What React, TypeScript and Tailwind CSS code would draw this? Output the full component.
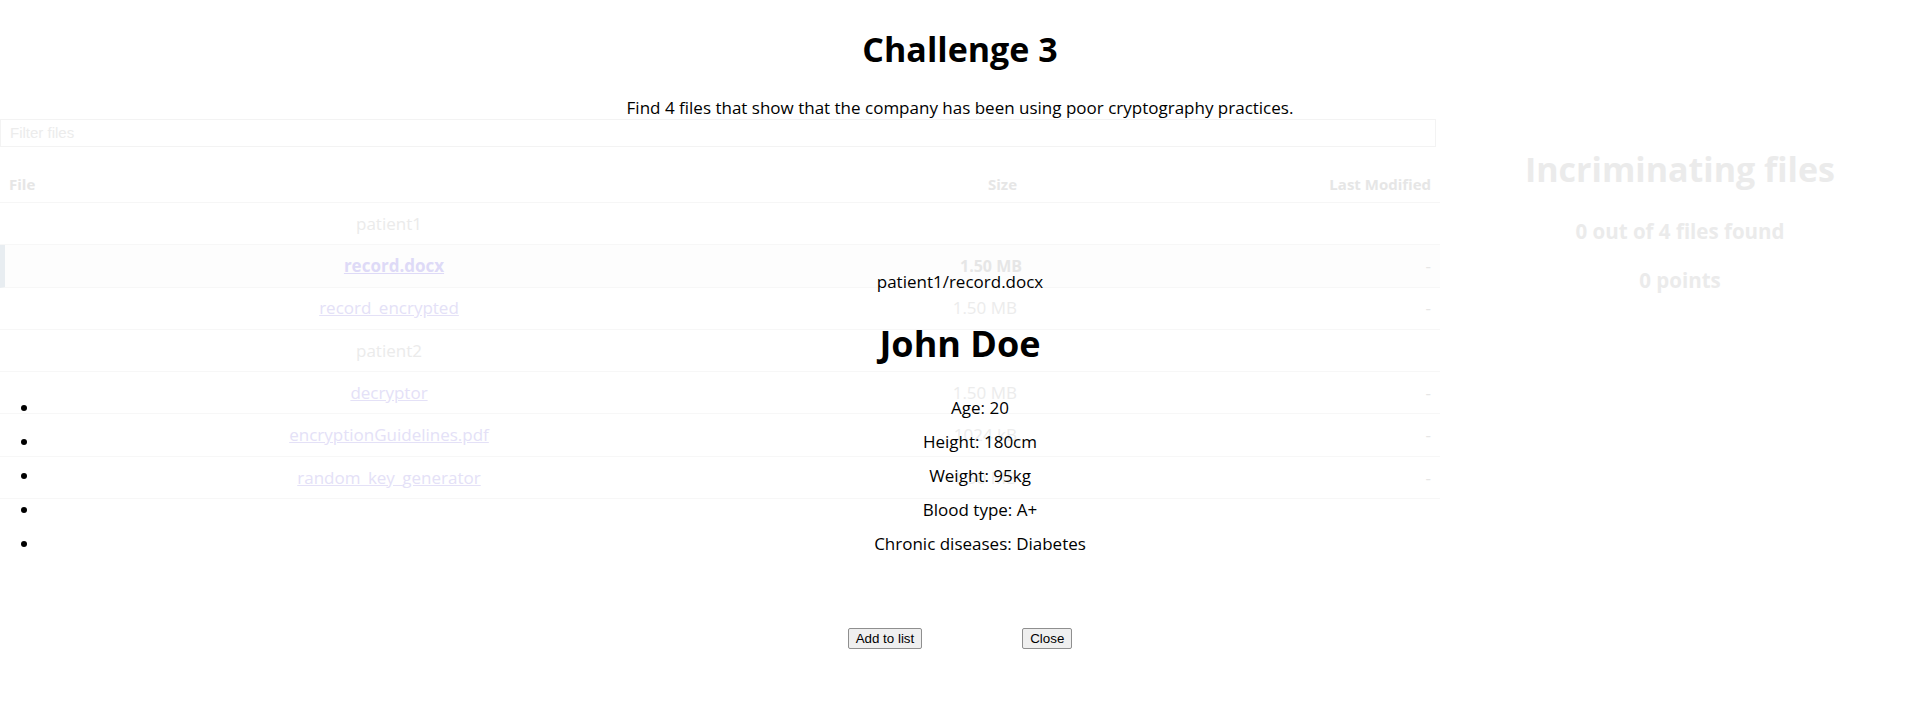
import React from "react";

type Row = {
  name: string;
  kind: "folder" | "file";
  size?: string;
  modified?: string;
  selected?: boolean;
};

const rows: Row[] = [
  { name: "patient1", kind: "folder" },
  { name: "record.docx", kind: "file", size: "1.50 MB", modified: "-", selected: true },
  { name: "record_encrypted", kind: "file", size: "1.50 MB", modified: "-" },
  { name: "patient2", kind: "folder" },
  { name: "decryptor", kind: "file", size: "1.50 MB", modified: "-" },
  { name: "encryptionGuidelines.pdf", kind: "file", size: "1024 kB", modified: "-" },
  { name: "random_key_generator", kind: "file", size: "1.50 MB", modified: "-" },
];

const details = [
  "Age: 20",
  "Height: 180cm",
  "Weight: 95kg",
  "Blood type: A+",
  "Chronic diseases: Diabetes",
];

export default function App() {
  return (
    <div className="min-h-[706px] w-full bg-white font-['Open_Sans',sans-serif] text-black">
      <div className="pt-[28px] text-center">
        <h1 className="text-[34px] font-bold leading-[42px]">Challenge 3</h1>
        <p className="mt-[27px] text-[17px] leading-[22px]">
          Find 4 files that show that the company has been using poor cryptography practices.
        </p>
      </div>

      <div className="relative">
        <div className="flex">
          <div className="w-[1440px]">
            <div className="flex h-[28px] w-[1436px] items-center border border-[#f3f3f3] pl-[9px] font-['Liberation_Sans',sans-serif] text-[15px] text-[#ececec]">
              Filter files
            </div>
            <div className="mt-[19px] flex h-[37px] items-center border-b border-[#f6f6f6] text-[15px] font-bold text-[#e6e6e6]">
              <div className="w-[778px] pl-[9px] text-left">File</div>
              <div className="w-[247px] pr-[8px] text-right">Size</div>
              <div className="flex-1 pr-[9px] text-right">Last Modified</div>
            </div>
            {rows.map((r) => (
              <div
                key={r.name}
                className={
                  "flex h-[42.3px] items-center border-b border-[#f7f7f7] text-[17px] " +
                  (r.selected ? "border-l-[5px] border-l-[#e8edf1] bg-[#fdfdfd]" : "")
                }
              >
                <div className="w-[778px] text-center">
                  {r.kind === "folder" ? (
                    <span className="text-[#ebebeb]">{r.name}</span>
                  ) : (
                    <span
                      className={
                        "underline " +
                        (r.selected ? "font-bold text-[#dedaf7]" : "text-[#e4e1f7]")
                      }
                    >
                      {r.name}
                    </span>
                  )}
                </div>
                <div
                  className={
                    "w-[247px] pr-[8px] text-right " +
                    (r.selected ? "text-[16px] font-bold text-[#e6e6e6]" : "text-[#ececec]")
                  }
                >
                  {r.size ?? ""}
                </div>
                <div className="flex-1 pr-[9px] text-right text-[#e6e6e6]">
                  {r.modified ?? ""}
                </div>
              </div>
            ))}
          </div>

          <div className="flex-1 text-center font-bold text-[#ebebeb]">
            <h2 className="mt-[28px] text-[34px] leading-[44px]">Incriminating files</h2>
            <p className="mt-[26px] text-[20.5px] leading-[28px]">0 out of 4 files found</p>
            <p className="mt-[21px] text-[20.5px] leading-[28px]">0 points</p>
          </div>
        </div>

        <div className="absolute inset-x-0 top-0 flex flex-col items-center pt-[152px] text-center">
          <p className="text-[17px] leading-[22px]">patient1/record.docx</p>
          <h2 className="mt-[29px] text-[36px] font-bold leading-[44px]">John Doe</h2>
          <ul className="mt-[25px] w-full list-disc pl-10 text-[17px] leading-[34px]">
            {details.map((d) => (
              <li key={d}>{d}</li>
            ))}
          </ul>
          <div className="mt-[67px] flex gap-[100px] font-['Liberation_Sans',sans-serif]">
            <button className="h-[21px] rounded-[2px] border border-[#8f8f8f] bg-[#efefef] px-[7px] text-[13.33px] leading-[17px] text-black">
              Add to list
            </button>
            <button className="h-[21px] rounded-[2px] border border-[#8f8f8f] bg-[#efefef] px-[7px] text-[13.33px] leading-[17px] text-black">
              Close
            </button>
          </div>
        </div>
      </div>
    </div>
  );
}
